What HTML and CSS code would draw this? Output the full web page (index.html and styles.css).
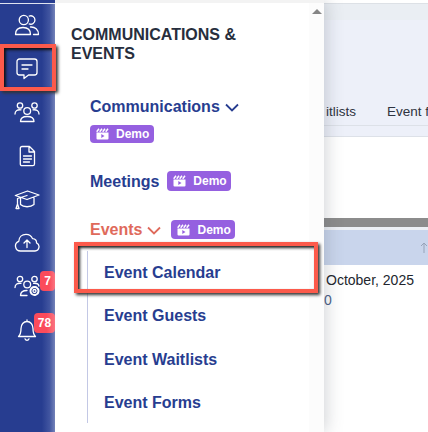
FILE: index.html
```html
<!DOCTYPE html>
<html lang="en">
<head>
  <meta charset="UTF-8" />
  <meta name="viewport" content="width=device-width, initial-scale=1" />
  <title>Communications &amp; Events</title>
  <link rel="stylesheet" href="styles.css">
</head>
<body>
  <!-- Clapperboard icon shared by the demo badges -->
  <svg class="symbols" aria-hidden="true">
    <symbol id="clapper" viewBox="0 0 13 12">
      <path d="M.5 4.5h12v6a1 1 0 0 1-1 1h-10a1 1 0 0 1-1-1z" fill="#fff"/>
      <path d="M.7 3.7 3 .8M3.7 3.7 6 .8M6.7 3.7 9 .8M9.7 3.7 12 .8" stroke="#fff" stroke-width="1.5"/>
      <path d="M5.3 6v4l3.2-2z" fill="#9560e0"/>
    </symbol>
  </svg>

  <div class="app">
    <nav class="sidebar">
      <a class="nav-item">
        <svg class="icon" viewBox="0 0 26 24"><circle cx="9.8" cy="7" r="4.6"/><path d="M15.2 3.1a4.2 4.2 0 1 1 0 7.8M1.5 21.5c0-4.5 3-7 7.5-7s7.5 2.5 7.5 7zM16.5 14c4.5-.3 8 2.5 8 7.5h-5"/></svg>
      </a>
      <a class="nav-item active">
        <svg class="icon" viewBox="0 0 26 24"><path d="M5.5 3h15a2.5 2.5 0 0 1 2.5 2.5v11a2.5 2.5 0 0 1-2.5 2.5h-6l-4.5 3.500V19H5.500A2.500 2.500 0 0 1 3 16.500v-11A2.500 2.500 0 0 1 5.500 3zM8 9h10M8 13h6"/></svg>
      </a>
      <a class="nav-item">
        <svg class="icon" viewBox="0 0 26 24"><circle cx="6" cy="5.5" r="2.7"/><circle cx="20.5" cy="5.5" r="2.7"/><circle cx="13.2" cy="11" r="3.4"/><path d="M6.5 21.5c0-3.5 2.5-5 6.7-5s6.8 1.5 6.8 5zM1 14c0-3.5 2.5-4.5 6-4.2M25 14c0-3.5-2.5-4.5-6-4.2"/></svg>
      </a>
      <a class="nav-item">
        <svg class="icon" viewBox="0 0 26 24"><path d="M8 2.5h7.5l5 5V20a1.7 1.7 0 0 1-1.7 1.7H8A1.7 1.7 0 0 1 6.3 20V4.2A1.7 1.7 0 0 1 8 2.5zM15 2.5V8h5.5M9.5 12h8M9.5 15h8M9.5 18h6"/></svg>
      </a>
      <a class="nav-item">
        <svg class="icon" viewBox="0 0 26 24"><path d="M1.3 8.5 13.5 4l11.5 4-12 4.5zM6.5 11v6.5c3 3 10 3 13.5 0V11M13 8.5 3.5 11.5V17M3.5 17l-1.5 4.5h3z"/></svg>
      </a>
      <a class="nav-item">
        <svg class="icon" viewBox="0 0 26 24"><path d="M6.5 20a5 5 0 0 1-1.7-9.7C5 6 8 3.3 12 3.3c3 0 5.5 1.5 6.5 4.3 3 .2 4.2 2 4 4.2A4.3 4.3 0 0 1 21 20zM13 16.5V9M10 12l3-3 3 3"/></svg>
      </a>
      <a class="nav-item">
        <svg class="icon" viewBox="0 0 26 24"><circle cx="6" cy="5" r="2.7"/><circle cx="20.5" cy="5" r="2.7"/><circle cx="13.2" cy="10.5" r="3.4"/><path d="M13 21.5H6.5c0-3.5 2.5-5 6.5-5M1 13.5c0-3.5 2.5-4.5 6-4.2M25 12c-.5-2.2-2.5-3-5.5-2.7"/><circle cx="20.5" cy="17" r="4" stroke-width="2" stroke-dasharray="2.2 .95"/><circle cx="20.5" cy="17" r="1.5"/></svg>
        <span class="count count-sm">7</span>
      </a>
      <a class="nav-item">
        <svg class="icon" viewBox="0 0 26 24"><path d="M4.5 18.5c2-1.8 2.500-4 2.500-8 0-4 2.500-7 6-7s6 3 6 7c0 4 .5 6.200 2.500 8zM13 3.500V2M11 20.800c.8 2 3.200 2 4 0"/></svg>
        <span class="count count-lg">78</span>
      </a>
    </nav>

    <aside class="panel">
      <h1>COMMUNICATIONS &amp; EVENTS</h1>

      <div class="menu">
        <a class="menu-link">Communications
          <svg class="chevron" viewBox="0 0 14 9"><path d="m1 1.5 6 6 6-6"/></svg>
        </a>
        <span class="demo"><svg><use href="#clapper"/></svg>Demo</span>

        <div class="menu-row meetings">
          <a class="menu-link">Meetings</a>
          <span class="demo"><svg><use href="#clapper"/></svg>Demo</span>
        </div>

        <div class="menu-row events">
          <a class="menu-link open">Events
            <svg class="chevron" viewBox="0 0 14 9"><path d="m1 1.5 6 6 6-6"/></svg>
          </a>
          <span class="demo"><svg><use href="#clapper"/></svg>Demo</span>
        </div>
      </div>

      <div class="submenu">
        <a class="current">Event Calendar</a>
        <a>Event Guests</a>
        <a>Event Waitlists</a>
        <a>Event Forms</a>
      </div>
      <div class="scrollbar"></div>
    </aside>

    <main class="content">
      <div class="hero">
        <div class="tabs"><span>itlists</span><span>Event f</span></div>
      </div>
      <div class="toolbar"></div>
      <div class="divider"></div>
      <div class="table-head">
        <svg viewBox="0 0 16 14"><path d="M4 12V2M1 5l3-3 3 3M11 2v10M8 9l3 3 3-3"/></svg>
      </div>
      <div class="table-row">October, 2025<br><a>0</a></div>
    </main>
  </div>
</body>
</html>
```

FILE: styles.css
```css
*, *::before, *::after {
  box-sizing: border-box;
}
body {
  margin: 0;
  height: 432px;
  overflow: hidden;
  background: #fff;
  font-family: "Liberation Sans", Arial, sans-serif;
}
.symbols {
  position: absolute;
  width: 0;
  height: 0;
}
.app {
  display: flex;
  width: 428px;
  height: 432px;
}

/* Sidebar */
.sidebar {
  position: relative;
  z-index: 3;
  width: 55px;
  flex: none;
  padding-top: 3px;
  background: linear-gradient(90deg, #273d90 76%, #4155a0 90%, #7482b9);
  box-shadow: inset 0 3px #273d90, inset 0 4px #dfe3f0;
}
.nav-item {
  position: relative;
  display: flex;
  align-items: center;
  justify-content: center;
  height: 43.6px;
  padding-right: 1px;
}
.icon {
  width: 26px;
  height: 24px;
  fill: none;
  stroke: #fff;
  stroke-width: 1.3;
  stroke-linejoin: round;
  stroke-linecap: round;
}
.nav-item.active::after {
  content: "";
  position: absolute;
  z-index: 3;
  left: 0;
  top: -3px;
  width: 56px;
  height: 47px;
  border: 4px solid #fc5a4b;
  box-shadow: 2px 2px 3px #333, inset 2px 2px 3px #111;
}
.count {
  position: absolute;
  right: 0;
  top: 6px;
  width: 21px;
  height: 20px;
  border-radius: 4px;
  background: linear-gradient(90deg, #fb4b5b 60%, #fa7582);
  color: #fff;
  font-size: 12px;
  font-weight: bold;
  line-height: 20px;
  text-align: center;
}
.count-sm {
  width: 15px;
}
.count-lg {
  top: 5px;
}

/* Menu panel */
.panel {
  position: relative;
  z-index: 2;
  width: 269px;
  flex: none;
  padding: 25px 0 0 16px;
  background: linear-gradient(#f3f3f3 3px, #fff 3px);
  box-shadow: 2px 0 16px rgba(70, 80, 90, 0.25);
  clip-path: inset(0 -24px 0 0);
}
h1 {
  width: 190px;
  margin: 0;
  color: #272e3d;
  font-size: 16px;
  line-height: 19px;
}
.menu {
  padding: 34px 0 0 19px;
}
.menu-link {
  display: flex;
  align-items: center;
  gap: 5px;
  color: #273d90;
  font-size: 16px;
  font-weight: bold;
  line-height: 19px;
}
.menu-link.open {
  color: #df6a5b;
}
.chevron {
  width: 14px;
  height: 9px;
  margin-top: 1px;
  fill: none;
  stroke: currentColor;
  stroke-width: 1.8;
}
.demo {
  display: flex;
  align-items: center;
  width: 64px;
  height: 18px;
  margin-top: 9px;
  padding-left: 6px;
  border-radius: 4px;
  background: #9560e0;
  color: #fff;
  font-size: 12px;
  font-weight: bold;
}
.demo svg {
  width: 13px;
  height: 12px;
  margin-right: 7px;
}
.menu-row {
  display: flex;
  align-items: center;
}
.menu-row .demo {
  height: 20px;
  margin: 0 0 0 8px;
}
.meetings {
  margin-top: 28px;
}
.events {
  margin-top: 29px;
}
.menu-row.events .demo {
  height: 19px;
  margin-left: 10px;
}
.submenu {
  display: flex;
  flex-direction: column;
  margin: 12px 0 0 16px;
  width: 220px;
  height: 172px;
  border-left: 1px solid #c3c8e5;
}
.submenu a {
  position: relative;
  flex: none;
  height: 43.3px;
  padding-left: 16px;
  color: #273d90;
  font-size: 16px;
  font-weight: bold;
  line-height: 43px;
}
.submenu .current::after {
  content: "";
  position: absolute;
  left: -14px;
  top: -9px;
  width: 244px;
  height: 51px;
  border: 4px solid #fc5a4b;
  box-shadow: 2px 2px 3px #333, inset 2px 2px 3px #222;
}
.scrollbar {
  position: absolute;
  z-index: -1;
  right: 0;
  top: 3px;
  width: 15px;
  height: 429px;
  background: #fcfcfc;
}
.scrollbar::before {
  content: "";
  position: absolute;
  left: 3px;
  top: 6px;
  border: 5px solid transparent;
  border-top: 0;
  border-bottom-color: #858585;
}

/* Page behind the menu */
.content {
  flex: 1;
  overflow: hidden;
  white-space: nowrap;
}
.hero {
  display: flex;
  align-items: flex-end;
  height: 137px;
  padding-bottom: 10px;
  border-top: 3px solid #fff;
  border-bottom: 1px solid #dde1e8;
  background: linear-gradient(#dde1e6 1px, #eaeef3 1px 17px, #edf0f9 17px);
}
.tabs {
  display: flex;
  gap: 31px;
  width: 100%;
  height: 29px;
  padding-left: 2px;
  border-bottom: 1px solid #dde1e8;
  color: #2d3340;
  font-size: 13.5px;
  line-height: 30px;
}
.toolbar {
  height: 81px;
}
.divider {
  height: 12px;
  border-bottom: 3px solid #edf0f5;
  background: #8c8c8c;
}
.table-head {
  display: flex;
  align-items: center;
  justify-content: flex-end;
  height: 35px;
  background: #c9d5ec;
}
.table-head svg {
  width: 16px;
  height: 14px;
  flex: none;
  margin-right: -8px;
  fill: none;
  stroke: #97a3b8;
}
.table-row {
  padding: 5px 0 0 2px;
  color: #22262e;
  font-size: 14px;
  line-height: 20px;
}
.table-row a {
  color: #4b5f88;
  margin-left: -2px;
}
```
